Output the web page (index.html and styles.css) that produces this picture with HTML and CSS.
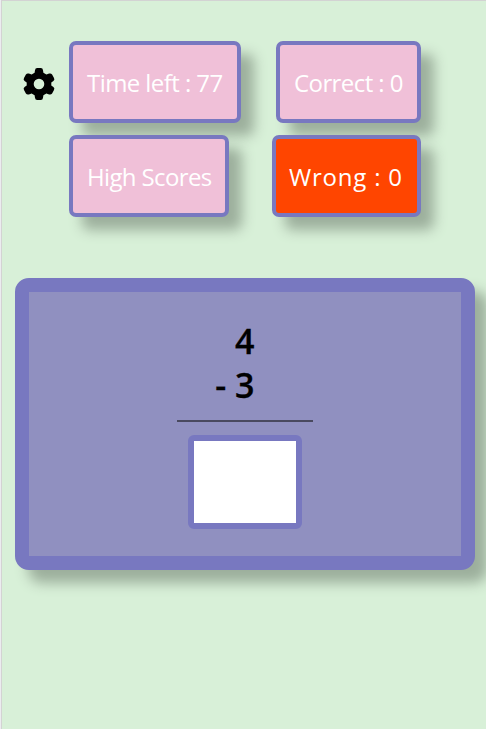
FILE: index.html
```html
<!DOCTYPE html>
<html lang="en">
<head>
<meta charset="utf-8">
<title>Math Quiz</title>
<link rel="stylesheet" href="styles.css">
</head>
<body>
<main class="app">
  <header class="top">
    <button class="settings" aria-label="Settings">
      <svg viewBox="0 0 32 32" width="32" height="32">
        <path fill-rule="evenodd" d="M12 2.300Q12.200 0 14.200 0h3.600Q19.800 0 20 2.300l.4 2.500 3 1.800 2.700-1Q28 5 29.100 6.500L31 10Q32 12 30.400 13L28.300 14.500v3L30.400 19Q32 20 31 22l-1.900 3.500Q28 27 26.100 26.400l-2.700-1-3 1.800-.4 2.500Q19.800 32 17.800 32h-3.600Q12.200 32 12 29.700l-.4-2.500-3-1.800-2.700 1Q4 27 2.900 25.500L1 22Q0 20 1.600 19L3.700 17.500v-3L1.600 13Q0 12 1 10L2.900 6.500Q4 5 5.900 5.600l2.700 1 3-1.800zM16 10.700a5.300 5.300 0 1 0 0 10.600a5.300 5.300 0 0 0 0-10.600z"/>
      </svg>
    </button>
    <div class="stats">
      <div class="row">
        <div class="box time">Time left : 77</div>
        <div class="box correct">Correct : 0</div>
      </div>
      <div class="row">
        <div class="box scores">High Scores</div>
        <div class="box wrong">Wrong : 0</div>
      </div>
    </div>
  </header>
  <section class="card">
    <div class="sum">
      <div>4</div>
      <div>- 3</div>
    </div>
    <div class="line"></div>
    <input class="answer" type="text" aria-label="Answer">
  </section>
</main>
</body>
</html>
```
FILE: styles.css
```css
* { box-sizing: border-box; }
html { background: #ececf0; }
body {
  margin: 0 0 0 1px;
  height: 729px;
  overflow: hidden;
  font-family: "Open Sans", "Noto Sans", sans-serif;
}
.app {
  height: 729px;
  padding: 40px 11px 0 13px;
  background: #d8f0d8;
  border: solid #d3d3d3;
  border-width: 1px 0 0 1px;
}
.top { display: flex; }
.settings {
  width: 32px;
  height: 32px;
  margin: 27px 14px 0 8px;
  padding: 0;
  border: 0;
  background: none;
}
.settings svg { display: block; }
.stats {
  display: flex;
  flex-direction: column;
  gap: 12px;
  width: 352px;
}
.row { display: flex; justify-content: space-between; }
.box {
  display: flex;
  align-items: center;
  justify-content: flex-start;
  height: 82px;
  padding: 2px 0 0 14px;
  border: 4px solid #7878c0;
  border-radius: 7px;
  background: #f0c0d8;
  color: #fff;
  font-size: 24px;
  line-height: 32px;
  white-space: nowrap;
  box-shadow: 13px 13px 13px #9caf9c;
}
.time { width: 172px; letter-spacing: -.57px; }
.correct { width: 145px; letter-spacing: -.58px; }
.scores { width: 160px; letter-spacing: -.64px; }
.wrong { width: 149px; padding-left: 13px; background: #ff4500; letter-spacing: .8px; }
.card {
  display: flex;
  flex-direction: column;
  align-items: center;
  width: 460px;
  height: 292px;
  margin-top: 61px;
  padding-top: 27px;
  border: 14px solid #7878c0;
  border-radius: 14px;
  background: #9090c0;
  box-shadow: 13px 13px 13px #9caf9c;
}
.sum {
  width: 80px;
  font-size: 34px;
  line-height: 44px;
  font-weight: 600;
  text-align: right;
  margin-right: 61px;
}
.sum div { -webkit-text-stroke: .3px #000; }
.line {
  width: 136px;
  height: 2px;
  margin-top: 13px;
  background: #49495f;
}
.answer {
  width: 114px;
  height: 94px;
  margin-top: 13px;
  padding: 0;
  border: 6px solid #7878c0;
  border-radius: 6px;
  background: #fff;
}
```
